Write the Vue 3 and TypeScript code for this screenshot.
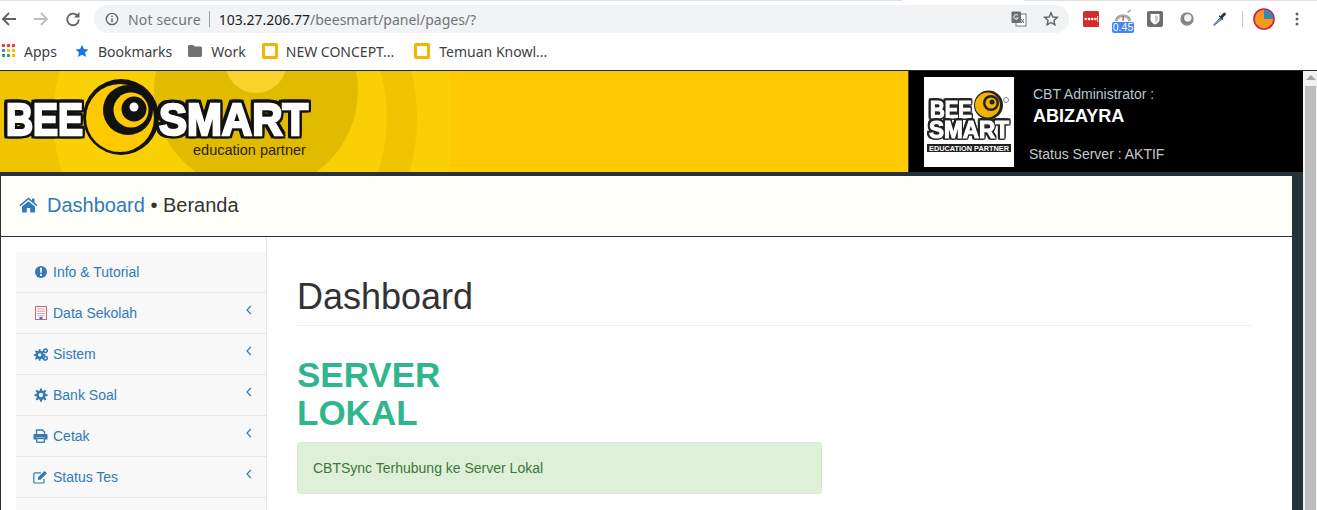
<script setup lang="ts">
const menu = [
  { label: 'Info & Tutorial', icon: 'info', arrow: false },
  { label: 'Data Sekolah', icon: 'building', arrow: true },
  { label: 'Sistem', icon: 'cogs', arrow: true },
  { label: 'Bank Soal', icon: 'cog', arrow: true },
  { label: 'Cetak', icon: 'print', arrow: true },
  { label: 'Status Tes', icon: 'edit', arrow: true },
]
const gear = 'M10.9 1h-1.8l-.4 2.2-1.3.5L5.6 2.4 4.3 3.7l1.3 1.8-.5 1.3L3 7.2V9l2.1.4.5 1.3-1.3 1.8 1.3 1.3 1.8-1.3 1.3.5.4 2.1h1.8l.4-2.1 1.3-.5 1.8 1.3 1.3-1.3-1.3-1.8.5-1.3 2.1-.4V7.2l-2.1-.4-.5-1.3 1.3-1.8-1.3-1.3-1.8 1.3-1.3-.5z'
</script>

<template>
  <div class="screen">
    <div class="chrome">
      <div class="tabline"><span class="tabgap"></span></div>
      <div class="toprow">
        <svg class="nav" width="18" height="18" viewBox="0 0 18 18"><path d="M16 9H3M9 3 3 9l6 6" fill="none" stroke="#5f6368" stroke-width="1.800"/></svg>
        <svg class="nav" width="18" height="18" viewBox="0 0 18 18"><path d="M2 9h13M9 3l6 6-6 6" fill="none" stroke="#b9bcc0" stroke-width="1.800"/></svg>
        <svg class="nav" width="18" height="18" viewBox="0 0 18 18"><path d="M14 6.500A5.800 5.800 0 1 0 14.800 9.500" fill="none" stroke="#5f6368" stroke-width="1.800"/><path d="M15.500 2v5.500H10z" fill="#5f6368"/></svg>
        <div class="omnibox">
          <svg width="14" height="14" viewBox="0 0 14 14"><circle cx="7" cy="7" r="5.700" fill="none" stroke="#5f6368" stroke-width="1.300"/><path d="M6.300 6.200h1.400v4H6.300zM6.300 3.700h1.400v1.400H6.300z" fill="#5f6368"/></svg>
          <span class="secure">Not secure</span>
          <span class="pipe"></span>
          <span class="url"><b>103.27.206.77</b>/beesmart/panel/pages/?</span>
          <span class="grow"></span>
          <svg class="translate" width="16" height="16" viewBox="0 0 16 16"><rect x="5" y="3" width="10" height="12" fill="#fff" stroke="#777" stroke-width="1"/><rect x="0.500" y="0.500" width="9.500" height="11.500" rx="1" fill="#6b6f73"/><path d="M7 4.500A2.300 2.300 0 1 0 7.200 7H5.300" fill="none" stroke="#fff" stroke-width="1"/><path d="m10 8 3 4M13 8l-3 4" stroke="#666" stroke-width="1"/></svg>
          <svg class="star" width="16" height="16" viewBox="0 0 16 16"><path d="m8 1.800 1.800 4.200 4.500.4-3.400 3 1 4.400L8 11.500l-3.900 2.300 1-4.400-3.400-3 4.500-.4z" fill="none" stroke="#5f6368" stroke-width="1.400"/></svg>
        </div>
        <div class="exts">
          <svg class="ext1" width="16" height="16" viewBox="0 0 16 16"><rect width="16" height="16" rx="1.500" fill="#d32d27"/><g fill="#fff"><circle cx="2.800" cy="8" r="1.300"/><circle cx="6" cy="8" r="1.300"/><circle cx="9.200" cy="8" r="1.300"/><circle cx="12.400" cy="8" r="1.300"/><rect x="14.300" y="5" width="0.800" height="6"/></g></svg>
          <div class="speed">
            <svg width="18" height="13" viewBox="0 0 18 13"><path d="M2 12a7.300 7.300 0 0 1 14 0" fill="none" stroke="#a5a8ab" stroke-width="3"/><path d="m9 12 .3-5" stroke="#b55" stroke-width="1.300"/><path d="m13.500 3.500 3-2.500" stroke="#999" stroke-width="1.500"/></svg>
            <span class="badge">0.45</span>
          </div>
          <svg class="ext3" width="16" height="16" viewBox="0 0 16 16"><rect width="16" height="16" rx="2" fill="#6c6f72"/><path d="M3.500 3h9v5.500c0 2.500-2.500 4-4.500 5-2-1-4.500-2.500-4.500-5z" fill="#fff"/><path d="M8 4.500h3v4c0 1.500-1.500 2.500-3 3.300z" fill="#c8c9ca"/></svg>
          <svg class="ext4" width="14" height="14" viewBox="0 0 14 14"><circle cx="7" cy="7" r="5.500" fill="#777" stroke="#8a8a8a" stroke-width="2.400"/><circle cx="7.800" cy="6" r="3.700" fill="#f4f4f4"/></svg>
          <svg class="ext5" width="16" height="16" viewBox="0 0 16 16"><path d="M2 14.500 1.500 14 8 7l1.500 1.500z" fill="#7fa9e0" stroke="#3f72bb" stroke-width="1"/><path d="m7 5.500 3.500 3.500 1-1-1-1 3-3a1.400 1.400 0 0 0-2-2l-3 3-1-1z" fill="#333"/></svg>
          <span class="sep"></span>
          <svg class="avatar" width="22" height="22" viewBox="0 0 22 22"><circle cx="11" cy="11" r="10" fill="#f6981d" stroke="#c5203e" stroke-width="1.600"/><path d="M11 1.500a9.500 9.500 0 0 1 9.500 9.500H11z" fill="#3589b8"/></svg>
          <svg class="dots" width="4" height="14" viewBox="0 0 4 14"><circle cx="2" cy="2" r="1.500" fill="#5f6368"/><circle cx="2" cy="7" r="1.500" fill="#5f6368"/><circle cx="2" cy="12" r="1.500" fill="#5f6368"/></svg>
        </div>
      </div>
      <div class="bookmarks">
        <span class="bm apps">
          <svg width="15" height="15" viewBox="0 0 15 15"><g><rect x="1" y="0" width="3" height="3" fill="#ea4335"/><rect x="6" y="0" width="3" height="3" fill="#ea4335"/><rect x="11" y="0" width="3" height="3" fill="#ea4335"/><rect x="1" y="5" width="3" height="3" fill="#4285f4"/><rect x="6" y="5" width="3" height="3" fill="#fbbc05"/><rect x="11" y="5" width="3" height="3" fill="#fbbc05"/><rect x="1" y="10" width="3" height="3" fill="#34a853"/><rect x="6" y="10" width="3" height="3" fill="#34a853"/><rect x="11" y="10" width="3" height="3" fill="#fbbc05"/></g></svg>
          Apps
        </span>
        <span class="bm marks">
          <svg width="14" height="14" viewBox="0 0 14 14"><path d="m7 .800 1.900 4.300 4.600.4-3.500 3 1.100 4.600L7 10.700l-4.100 2.400L4 8.500l-3.500-3 4.600-.4z" fill="#1a73e8"/></svg>
          Bookmarks
        </span>
        <span class="bm work">
          <svg width="14" height="12" viewBox="0 0 14 12"><path d="M0 1.500C0 .7.600 0 1.300 0h4l1.400 1.600h6c.7 0 1.300.6 1.300 1.300v7.600c0 .8-.6 1.400-1.300 1.400H1.300C.6 12 0 11.400 0 10.600z" fill="#6f7377"/></svg>
          Work
        </span>
        <span class="bm slide">
          <span class="slides"></span>
          NEW CONCEPT...
        </span>
        <span class="bm last">
          <span class="slides"></span>
          Temuan Knowl...
        </span>
      </div>
    </div>

    <div class="viewport">
      <div class="page">
        <header class="brand">
          <div class="banner">
            <div class="art">
              <span class="ring r1"></span>
              <span class="ring r3"></span>
              <span class="ring r4"></span>
            </div>
            <svg class="logo" width="320" height="84" viewBox="0 0 320 84">
              <text x="6" y="56" textLength="77" lengthAdjust="spacingAndGlyphs" class="logo-text">BEE</text>
              <circle cx="121" cy="38" r="38" fill="#111"/>
              <circle cx="120" cy="39" r="34" fill="#ffc900"/>
              <circle cx="128" cy="31" r="25" fill="#111"/>
              <circle cx="131" cy="31" r="17.500" fill="#ffc900"/>
              <circle cx="134" cy="30" r="12.500" fill="#111"/>
              <circle cx="134" cy="28" r="4.500" fill="#fff"/>
              <text x="159" y="56" textLength="149" lengthAdjust="spacingAndGlyphs" class="logo-text">SMART</text>
              <text x="193" y="76" class="logo-sub">education partner</text>
            </svg>
          </div>
          <div class="account">
            <div class="photo">
              <svg width="90" height="90" viewBox="0 0 90 90">
                <circle cx="64.500" cy="28" r="14.500" fill="#222"/>
                <circle cx="63.500" cy="28" r="12.500" fill="#f2b200"/>
                <circle cx="67" cy="26" r="8" fill="#222"/>
                <circle cx="67" cy="26" r="5.500" fill="#f2b200"/>
                <circle cx="68" cy="25" r="2.500" fill="#222"/>
                <circle cx="82" cy="23" r="2.500" fill="none" stroke="#888" stroke-width="1"/>
                <text x="6" y="41" textLength="42" lengthAdjust="spacingAndGlyphs" class="mini-text">BEE</text>
                <text x="5" y="61" textLength="80" lengthAdjust="spacingAndGlyphs" class="mini-text">SMART</text>
                <rect x="3" y="67" width="84" height="8" fill="#222"/>
                <text x="5" y="74" textLength="80" lengthAdjust="spacingAndGlyphs" class="mini-sub">EDUCATION PARTNER</text>
              </svg>
            </div>
            <div class="who">
              <div class="role">CBT Administrator :</div>
              <div class="name">ABIZAYRA</div>
              <div class="status">Status Server : AKTIF</div>
            </div>
          </div>
        </header>
        <div class="band">
          <div class="panel">
            <div class="crumb">
              <svg class="home" width="19" height="16" viewBox="0 0 19 16"><path d="M9.500 0.500 0.500 8l1 1.200L9.500 2.600l8 6.600 1-1.200-3-2.500V1.500h-2.500v2zM3 9.500V15.500h4.800v-4.500h3.400v4.500H16V9.500L9.500 4.200z" fill="#337ab7"/></svg>
              <a>Dashboard</a><span class="rest">&nbsp;• Beranda</span>
            </div>
            <div class="body">
              <nav class="side">
                <div v-for="item in menu" :key="item.label" class="item">
                  <span class="ico">
                    <svg v-if="item.icon === 'info'" width="14" height="14" viewBox="0 0 14 14"><circle cx="7" cy="7" r="6" fill="#337ab7"/><path d="M6 2.800h2l-.2 5H6.200zM6.100 9h1.800v1.900H6.100z" fill="#f8f8f8"/></svg>
                    <svg v-else-if="item.icon === 'building'" width="12" height="14" viewBox="0 0 12 14"><rect x=".5" y=".5" width="11" height="13" fill="#fff" stroke="#c9696f"/><path d="M2.500 3h7M2.500 5.300h7M2.500 7.600h7M2.500 9.900h7" stroke="#c9696f" stroke-width="1" stroke-dasharray="1.300 .6"/><rect x="4.500" y="11" width="3" height="2.500" fill="#337ab7"/></svg>
                    <svg v-else-if="item.icon === 'cogs'" width="16" height="15" viewBox="0 0 18 17"><path :d="gear" fill="#337ab7" transform="translate(-2 1)"/><circle cx="8" cy="9" r="2" fill="#f8f8f8"/><circle cx="15" cy="4" r="2.200" fill="none" stroke="#337ab7" stroke-width="1.800"/><circle cx="15" cy="13" r="2.200" fill="none" stroke="#337ab7" stroke-width="1.800"/></svg>
                    <svg v-else-if="item.icon === 'cog'" width="14" height="14" viewBox="2.500 .5 15 15"><path :d="gear" fill="#337ab7"/><circle cx="10" cy="8" r="2.300" fill="#f8f8f8"/></svg>
                    <svg v-else-if="item.icon === 'print'" width="15" height="14" viewBox="0 0 15 14"><path d="M3.500 1h6l2 2v3h-8z" fill="none" stroke="#337ab7" stroke-width="1.300"/><path d="M1.500 5h12c.6 0 1 .4 1 1v4.500h-2.500V8.500H3v2H.5V6c0-.6.400-1 1-1z" fill="#337ab7"/><rect x="3.700" y="9.500" width="7.600" height="3.700" fill="none" stroke="#337ab7" stroke-width="1.300"/></svg>
                    <svg v-else width="15" height="14" viewBox="0 0 15 14"><path d="M11 9v3a1 1 0 0 1-1 1H2a1.200 1.200 0 0 1-1.200-1.200V4A1.200 1.200 0 0 1 2 2.800h6" fill="none" stroke="#337ab7" stroke-width="1.200"/><path d="M5 7.300 11.500 1 14 3.300 7.500 9.800H5z" fill="#337ab7"/></svg>
                  </span>
                  <span class="label">{{ item.label }}</span>
                  <svg v-if="item.arrow" class="arrow" width="6" height="10" viewBox="0 0 6 10"><path d="M4.800 1 1 5l3.800 4" fill="none" stroke="#337ab7" stroke-width="1.200"/></svg>
                </div>
              </nav>
              <main class="content">
                <h1>Dashboard</h1>
                <h2>SERVER<br>LOKAL</h2>
                <div class="alert">CBTSync Terhubung ke Server Lokal</div>
              </main>
            </div>
          </div>
        </div>
      </div>
      <div class="scrollbar">
        <span class="up"></span>
        <span class="thumb"></span>
      </div>
    </div>
  </div>
</template>

<style>
html, body { margin: 0; padding: 0; overflow: hidden; background: #fff; }
</style>

<style scoped>
.screen { width: 1317px; height: 510px; overflow: hidden; display: flex; flex-direction: column; font-family: "Liberation Sans", Arial, sans-serif; }
.chrome { height: 70px; flex: none; background: #fff; box-sizing: border-box; font-family: "Noto Sans", Roboto, sans-serif; }
.tabline { height: 1px; background: #dee1e6; position: relative; }
.tabgap { position: absolute; left: 902px; width: 122px; top: 0; bottom: 0; background: #fff; }
.toprow { height: 28px; display: flex; align-items: center; margin-top: 4px; }
.nav { margin-right: 14px; flex: none; }
.omnibox { width: 975px; height: 28px; margin-left: -2px; border-radius: 14px; background: #f1f3f4; display: flex; align-items: center; padding: 0 9px 0 11px; box-sizing: border-box; font-size: 14px; color: #5f6368; flex: none; }
.secure { margin-left: 9px; color: #70757a; letter-spacing: .15px; }
.pipe { width: 1px; height: 16px; background: #9aa0a6; margin: 0 9px 0 8px; }
.url { color: #70757a; }
.url b { font-weight: 400; color: #202124; }
.grow { flex: 1; }
.star { margin-left: 16px; margin-right: 1px; }
.exts { display: flex; align-items: center; margin-left: 14px; flex: none; }
.speed { width: 24px; height: 26px; margin-left: 12px; position: relative; }
.speed svg { position: absolute; left: 3px; top: 3px; }
.badge { position: absolute; left: 1px; top: 16px; width: 22px; height: 11px; border-radius: 2px; background: #4285f4; color: #fff; font: 10.500px/11px "Liberation Sans", sans-serif; text-align: center; }
.ext3 { margin-left: 12px; }
.ext4 { margin-left: 17px; }
.ext5 { margin-left: 18px; }
.sep { width: 1px; height: 16px; background: #c8cacc; margin: 0 10px 0 14px; }
.dots { margin-left: 20px; }
.bookmarks { height: 30px; display: flex; align-items: center; font-size: 14px; color: #3c4043; padding-left: 1px; margin-top: 3px; }
.bm { display: flex; align-items: center; gap: 8px; margin-right: 18px; white-space: nowrap; }
.apps { margin-right: 18px; }
.marks { gap: 9px; margin-right: 16px; }
.work { gap: 9px; margin-right: 16px; }
.slide { margin-right: 19px; }
.last { gap: 9px; margin-left: 1px; }
.slides { width: 10px; height: 10px; border: 3px solid #f4b400; border-radius: 2px; background: #fff; display: block; }
.viewport { flex: 1; display: flex; min-height: 0; border-top: 1px solid #1e2a30; box-sizing: border-box; background: #fff; }
.page { width: 1303px; flex: none; display: flex; flex-direction: column; min-height: 0; }
.brand { height: 101px; flex: none; display: flex; }
.banner { width: 909px; flex: none; background: #ffc900; position: relative; overflow: hidden; border-right: 1px solid #444; box-sizing: border-box; }
.art { position: absolute; left: 0; top: 0; width: 450px; height: 101px; overflow: hidden; background: linear-gradient(90deg, #eec500 53px, #f8d003 53px); }
.ring { position: absolute; border-radius: 50%; }
.r1 { width: 334px; height: 334px; left: 53px; top: -120px; background: #f8d003; box-shadow: 0 0 0 30px #eec500; }
.r3 { width: 204px; height: 204px; left: 154px; top: -83px; background: #e0bb00; }
.r4 { width: 62px; height: 62px; left: 225px; top: -40px; background: #f8d32c; }
.logo { position: absolute; left: 0; top: 8px; }
.logo-text { font: 700 45px "Liberation Sans", Arial, sans-serif; fill: #fff; stroke: #fff; stroke-width: 2.400px; filter: drop-shadow(2.500px 0 0 #111) drop-shadow(-2.500px 0 0 #111) drop-shadow(0 2.500px 0 #111) drop-shadow(0 -2.500px 0 #111); }
.logo-sub { font: 400 14.500px "Liberation Sans", Arial, sans-serif; fill: #2b2400; }
.account { flex: 1; background: #000; display: flex; padding: 6px 0 0 15px; box-sizing: border-box; }
.photo { width: 90px; height: 90px; background: #fff; flex: none; }
.mini-text { font: 700 23px "Liberation Sans", Arial, sans-serif; fill: #fff; stroke: #fff; stroke-width: 1.100px; filter: drop-shadow(1.300px 0 0 #222) drop-shadow(-1.300px 0 0 #222) drop-shadow(0 1.300px 0 #222) drop-shadow(0 -1.300px 0 #222); }
.mini-sub { font: 700 7.500px "Liberation Sans", Arial, sans-serif; fill: #fff; }
.who { color: #fff; margin-left: 15px; flex: 1; }
.role { padding: 9px 0 0 4px; font-size: 14px; line-height: 17px; color: #b8c6d4; }
.name { padding: 2px 0 0 4px; font-size: 18px; line-height: 22px; font-weight: 700; color: #fff; }
.status { margin-top: 19px; font-size: 14px; line-height: 17px; color: #c5c9cc; }
.band { flex: 1; min-height: 0; background: #263238; padding-top: 4px; padding-right: 11px; display: flex; }
.panel { flex: 1; min-width: 0; background: #fff; border-left: 1px solid #263238; display: flex; flex-direction: column; }
.crumb { flex: none; background: #fffffa; border-bottom: 1px solid #263238; display: flex; align-items: center; padding: 0 0 2px 18px; height: 58px; font-size: 20px; color: #333; }
.crumb a { color: #337ab7; }
.home { margin-right: 9px; }
.body { flex: 1; min-height: 0; display: flex; }
.side { width: 250px; margin-left: 15px; padding-top: 15px; border-right: 1px solid #e7e7e7; flex: none; background: linear-gradient(#fff 15px, #f8f8f8 15px); }
.item { height: 40px; border-bottom: 1px solid #e7e7e7; padding-left: 17px; display: flex; align-items: center; font-size: 14px; color: #337ab7; position: relative; }
.ico { width: 15px; display: flex; justify-content: center; margin-right: 5px; }
.arrow { position: absolute; right: 14px; top: 12px; }
.content { flex: 1; padding: 0 41px 0 30px; min-width: 0; }
h1 { margin: 40px 0 0; padding-bottom: 8px; font-size: 36px; line-height: 40px; font-weight: 400; color: #333; border-bottom: 1px solid #eee; }
h2 { margin: 30px 0 0; font-size: 35px; line-height: 38px; font-weight: 700; color: #31b58f; }
.alert { width: 525px; height: 52px; box-sizing: border-box; margin-top: 10px; padding-left: 15px; display: flex; align-items: center; background: #dff0d8; border: 1px solid #d6e9c6; border-radius: 4px; color: #3c763d; font-size: 14px; }
.scrollbar { flex: 1; background: #f1f1f1; position: relative; }
.up { position: absolute; left: 3px; top: 4px; width: 0; height: 0; border: 5px solid transparent; border-top: 0; border-bottom: 5px solid #a3a3a3; }
.thumb { position: absolute; left: 2px; right: 1px; top: 15px; bottom: 0; background: #bdbdbd; }
</style>
